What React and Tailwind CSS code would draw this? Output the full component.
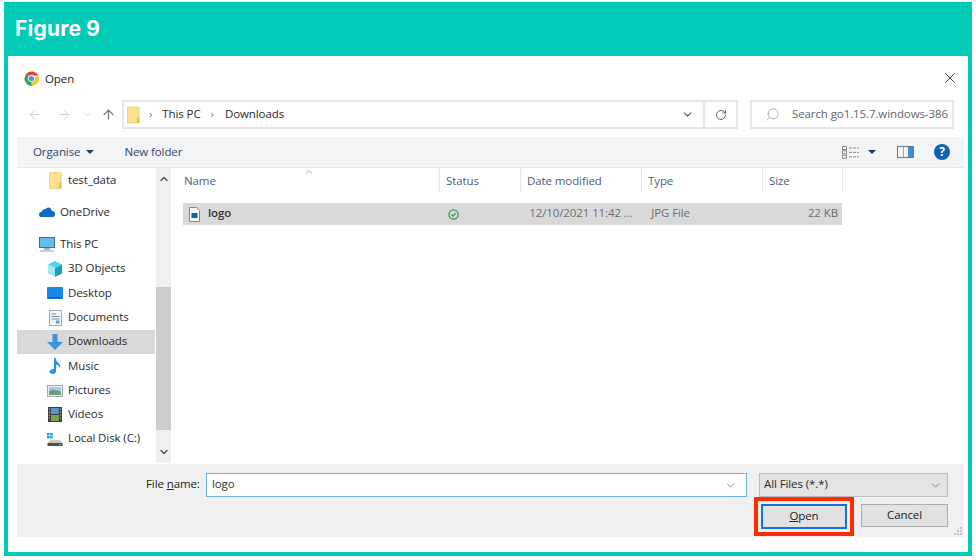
import React from 'react'
import { ArrowLeft, ArrowRight, ArrowUp, ChevronDown, ChevronUp, RotateCw, Search, X } from 'lucide-react'

const Folder = ({ className }) => (
  <svg viewBox="0 0 14 18" className={className}>
    <path d="M0.5 1 Q0.5 0.5 1 0.5 H13 V17.5 H1 Q0.5 17.5 0.5 17 Z" fill="#fbe08f" stroke="#f0d078" />
    <rect x="10.5" y="12" width="3" height="5.5" fill="#eac25e" />
  </svg>
)

const Chrome = () => (
  <svg viewBox="0 0 16 16" className="w-[15px] h-[15px]">
    <path d="M8 8 L2 3.4 A8 8 0 0 1 15.4 5 H8 Z" fill="#e0463a" />
    <path d="M8 8 L15.4 5 A8 8 0 0 1 8 16 Z" fill="#f7c531" />
    <path d="M8 8 L8 16 A8 8 0 0 1 2 3.4 Z" fill="#35a853" />
    <circle cx="8" cy="8" r="3.7" fill="#fff" />
    <circle cx="8" cy="8" r="2.8" fill="#4f8fe8" />
  </svg>
)

const Cloud = () => (
  <svg viewBox="0 0 16 10" className="w-[16px] h-[10px]">
    <path d="M3 10 Q0 10 0 7.4 Q0 5 2.6 4.8 Q3.6 1.8 6.6 2 Q8 0 10.4 0.6 Q12.6 1.4 12.6 3.8 Q16 4.2 16 7.2 Q16 10 13 10 Z" fill="#0f6cc4" />
  </svg>
)

const Monitor = () => (
  <svg viewBox="0 0 16 15" className="w-[16px] h-[15px]">
    <rect x="0.5" y="0.5" width="15" height="10" fill="#5fc0f0" stroke="#4d6a80" />
    <rect x="5" y="11" width="6" height="2" fill="#9fb4c2" />
    <rect x="1" y="13.5" width="14" height="1" fill="#8da2b0" />
  </svg>
)

const Cube = () => (
  <svg viewBox="0 0 16 16" className="w-[16px] h-[16px]">
    <path d="M8 0 L15 3.5 L8 7 L1 3.5 Z" fill="#52d3e4" />
    <path d="M1 3.5 L8 7 V16 L1 12.5 Z" fill="#a8e8ee" />
    <path d="M15 3.5 L8 7 V16 L15 12.5 Z" fill="#1a9cc0" />
  </svg>
)

const Desktop = () => (
  <svg viewBox="0 0 16 12" className="w-[16px] h-[12px]">
    <rect width="16" height="12" rx="0.5" fill="#1a88e6" />
    <rect x="1" y="10" width="14" height="1.2" fill="#0b5fa8" />
  </svg>
)

const Doc = () => (
  <svg viewBox="0 0 13 16" className="w-[13px] h-[16px]">
    <rect x="0.5" y="0.5" width="12" height="15" fill="#f4f4f4" stroke="#a9a9a9" />
    <path d="M2.5 4 H7 M2.5 6.5 H10.5 M2.5 9 H10.5" stroke="#7d8f9e" />
    <rect x="7" y="10.5" width="3.5" height="3" fill="#5ca3d6" />
  </svg>
)

const DownArrow = () => (
  <svg viewBox="0 0 16 16" className="w-[16px] h-[16px]">
    <path d="M5.5 0 H10.5 V8 H16 L8 16 L0 8 H5.5 Z" fill="#3c93e0" />
  </svg>
)

const Note = () => (
  <svg viewBox="0 0 12 16" className="w-[12px] h-[16px]">
    <path d="M5 0 H6.5 Q7 3.5 10 5.5 Q12 7.5 10.5 10 Q10.5 7.5 7 6.5 V13 Q7 16 3.5 16 Q0.5 16 0.5 13.6 Q0.5 11 5 11 Z" fill="#2396ea" />
  </svg>
)

const Picture = () => (
  <svg viewBox="0 0 16 12" className="w-[16px] h-[12px]">
    <rect x="0.5" y="0.5" width="15" height="11" fill="#e8eef0" stroke="#a8a8a8" />
    <rect x="2" y="2" width="12" height="4" fill="#a3cdea" />
    <path d="M2 6 L7 4.5 L14 6.5 V10 H2 Z" fill="#6f9a7e" />
  </svg>
)

const Film = () => (
  <svg viewBox="0 0 14 15" className="w-[14px] h-[15px]">
    <rect width="14" height="15" fill="#3f3f3f" />
    <rect x="3" y="1" width="8" height="6" fill="#5b93c4" />
    <rect x="3" y="8" width="8" height="6" fill="#7ba24e" />
    <path d="M1 2 H2 M1 5 H2 M1 8 H2 M1 11 H2 M12 2 H13 M12 5 H13 M12 8 H13 M12 11 H13" stroke="#ddd" />
  </svg>
)

const Disk = () => (
  <svg viewBox="0 0 16 13" className="w-[16px] h-[13px]">
    <rect x="0" y="0" width="2.6" height="2.4" fill="#18a0e8" />
    <rect x="3.2" y="0" width="2.6" height="2.4" fill="#18a0e8" />
    <rect x="0" y="3" width="2.6" height="2.4" fill="#18a0e8" />
    <rect x="3.2" y="3" width="2.6" height="2.4" fill="#18a0e8" />
    <path d="M3 7 H13 L15.5 10 H0.5 Z" fill="#c9c9c9" />
    <rect x="0.5" y="10" width="15" height="3" fill="#4d4d4d" />
    <rect x="12" y="11" width="2" height="1" fill="#5fd35f" />
  </svg>
)

const JpgIcon = () => (
  <svg viewBox="0 0 11 15" className="w-[11px] h-[15px]">
    <path d="M0.5 0.5 H7.5 L10.5 3.5 V14.5 H0.5 Z" fill="#fbfbfb" stroke="#7f8790" />
    <rect x="2.5" y="6" width="6" height="5" fill="#1a5fb0" />
  </svg>
)

const ViewsIcon = () => (
  <svg viewBox="0 0 17 13" className="w-[17px] h-[13px]">
    <rect x="0.5" y="0.5" width="4" height="3" fill="none" stroke="#8a8a8a" />
    <rect x="0.5" y="4.8" width="4" height="3" fill="none" stroke="#8a8a8a" />
    <rect x="0.5" y="9.2" width="4" height="3" fill="none" stroke="#8a8a8a" />
    <path d="M7 2 H17 M7 6.4 H17 M7 10.8 H17" stroke="#8a8a8a" strokeDasharray="3 1" />
  </svg>
)

const PaneIcon = () => (
  <svg viewBox="0 0 17 12" className="w-[17px] h-[12px]">
    <rect x="0.5" y="0.5" width="16" height="11" fill="#f4f4f4" stroke="#6c7a86" />
    <rect x="11" y="1" width="5" height="10" fill="#3f8fdc" />
    <rect x="6" y="1" width="1" height="10" fill="#9aa5ad" />
  </svg>
)

const Caret = () => <span className="w-0 h-0 border-x-[4px] border-x-transparent border-t-[4px] border-t-[#1f3a5f]" />

const places = [
  { label: 'test_data', icon: <Folder className="w-[13px] h-[17px]" />, pad: 'pl-[32px]', gap: 'w-[19px]', after: 'mb-[8px]' },
  { label: 'OneDrive', icon: <Cloud />, pad: 'pl-[22px]', gap: 'w-[21px]', after: 'mb-[8px]' },
  { label: 'This PC', icon: <Monitor />, pad: 'pl-[22px]', gap: 'w-[21px]', after: '' },
  { label: '3D Objects', icon: <Cube />, pad: 'pl-[30px]', gap: 'w-[21px]' },
  { label: 'Desktop', icon: <Desktop />, pad: 'pl-[30px]', gap: 'w-[21px]' },
  { label: 'Documents', icon: <Doc />, pad: 'pl-[32px]', gap: 'w-[19px]' },
  { label: 'Downloads', icon: <DownArrow />, pad: 'pl-[30px]', gap: 'w-[21px]', active: true },
  { label: 'Music', icon: <Note />, pad: 'pl-[32px]', gap: 'w-[19px]' },
  { label: 'Pictures', icon: <Picture />, pad: 'pl-[30px]', gap: 'w-[21px]' },
  { label: 'Videos', icon: <Film />, pad: 'pl-[31px]', gap: 'w-[20px]' },
  { label: 'Local Disk (C:)', icon: <Disk />, pad: 'pl-[30px]', gap: 'w-[21px]' },
]

const columns = [
  { label: 'Name', w: 'w-[267px]', pl: 'pl-[11px]' },
  { label: 'Status', w: 'w-[81px]', pl: 'pl-[6px]' },
  { label: 'Date modified', w: 'w-[121px]', pl: 'pl-[6px]' },
  { label: 'Type', w: 'w-[121px]', pl: 'pl-[6px]' },
  { label: 'Size', w: 'w-[80px]', pl: 'pl-[6px]' },
]

function App() {
  return (
    <div className="w-[976px] h-[560px] bg-white pt-[2px] pl-[4px] overflow-hidden font-['Open_Sans',sans-serif] text-[11.5px] tracking-[-0.1px] text-[#2b2b2b]">
      <div className="w-[968px] h-[554px] border-[4px] border-[#01cbb7] flex flex-col bg-white">
        <div className="h-[50px] shrink-0 bg-[#01cbb7] pl-[7px] flex items-center">
          <h1 className="font-['Inter',sans-serif] font-bold text-[21px] tracking-[0.2px] text-white -mt-[5px]">Figure 9</h1>
        </div>

        <div className="pl-[9px] pr-[4px] flex flex-col">
          {/* title bar */}
          <div className="h-[44px] pl-[7px] pr-[5px] flex items-center">
            <Chrome />
            <span className="ml-[6px] mt-[1px] text-[#222]">Open</span>
            <X size={18} strokeWidth={1.1} className="ml-auto text-[#222]" />
          </div>

          {/* address row */}
          <div className="h-[29px] flex items-center">
            <ArrowLeft size={15} strokeWidth={1.6} className="ml-[10px] text-[#d0d0d0]" />
            <ArrowRight size={15} strokeWidth={1.6} className="ml-[15px] text-[#d0d0d0]" />
            <ChevronDown size={9} strokeWidth={2} className="ml-[11px] text-[#d0d0d0]" />
            <ArrowUp size={15} strokeWidth={2} className="ml-[9px] text-[#777]" />
            <div className="ml-[6px] w-[616px] h-full border-2 border-[#e6e6e6] flex items-center">
              <Folder className="ml-[3px] w-[13px] h-[18px]" />
              <span className="ml-[9px] pb-[2px] text-[#777]">›</span>
              <span className="ml-[10px] pb-[2px]">This PC</span>
              <span className="ml-[10px] pb-[2px] text-[#777]">›</span>
              <span className="ml-[11px] pb-[2px]">Downloads</span>
              <ChevronDown size={13} strokeWidth={2} className="ml-auto mr-[9px] text-[#555]" />
              <div className="w-[33px] h-full border-l-2 border-[#e6e6e6] flex items-center justify-center">
                <RotateCw size={12} strokeWidth={2} className="text-[#666]" />
              </div>
            </div>
            <div className="ml-[12px] w-[204px] h-full border-2 border-[#e6e6e6] flex items-center text-[#666]">
              <Search size={15} strokeWidth={1.2} className="ml-[13px] -scale-x-100 text-[#9a9a9a]" />
              <span className="ml-[12px] pb-[2px] whitespace-nowrap">Search go1.15.7.windows-386</span>
            </div>
          </div>

          {/* command bar */}
          <div className="mt-[8px] h-[31px] bg-[#f3f4f6] border-b border-[#e4e6e9] flex items-center text-[#2f4566]">
            <span className="ml-[16px]">Organise</span>
            <span className="ml-[6px] flex"><Caret /></span>
            <span className="ml-[30px]">New folder</span>
            <span className="ml-auto flex items-center">
              <ViewsIcon />
              <span className="ml-[9px] flex"><Caret /></span>
              <span className="ml-[21px] flex"><PaneIcon /></span>
              <span className="ml-[20px] mr-[14px] w-[16px] h-[16px] rounded-full bg-[#0f62b8] text-white font-bold text-[12px] flex items-center justify-center">?</span>
            </span>
          </div>

          {/* body */}
          <div className="h-[295px] flex">
            <nav className="w-[138px] shrink-0">
              {places.map((p) => (
                <div key={p.label} className={`h-[24.3px] flex items-center ${p.pad} ${p.after || ''} ${p.active ? 'bg-[#d9d9d9]' : ''}`}>
                  <span className={`${p.gap} shrink-0 flex`}>{p.icon}</span>
                  <span className="pb-[2px] whitespace-nowrap">{p.label}</span>
                </div>
              ))}
            </nav>
            <div className="ml-[1px] w-[15px] shrink-0 bg-[#f0f0f0] flex flex-col items-center">
              <ChevronUp size={12} strokeWidth={3} className="mt-[5px] text-[#555]" />
              <div className="w-full h-[143px] mt-[102px] bg-[#cdcdcd]" />
              <ChevronDown size={12} strokeWidth={3} className="mt-[16px] text-[#555]" />
            </div>
            <div className="flex-1 ml-[2px] relative">
              <div className="flex h-[25px] pl-0">
                {columns.map((c) => (
                  <div key={c.label} className={`${c.w} ${c.pl} border-r border-[#e5e5e5] flex items-center text-[#4c607a]`}>{c.label}</div>
                ))}
              </div>
              <ChevronUp size={12} strokeWidth={1.2} className="absolute left-[130px] -top-[2px] text-[#777]" />
              <div className="mt-[10px] ml-[10px] w-[659px] h-[22px] bg-[#d9d9d9] flex items-center text-[#6d6d6d]">
                <span className="ml-[6px] flex"><JpgIcon /></span>
                <span className="ml-[8px] pb-[2px] font-semibold text-[#333]">logo</span>
                <svg viewBox="0 0 12 12" className="ml-[217px] w-[11px] h-[11px]">
                  <circle cx="6" cy="6" r="5" fill="none" stroke="#2e9e4f" strokeWidth="1.4" />
                  <path d="M3.6 6 L5.4 7.8 L8.5 4.4" fill="none" stroke="#2e9e4f" strokeWidth="1.3" />
                </svg>
                <span className="ml-[70px] pb-[2px] w-[122px] whitespace-nowrap">12/10/2021 11:42 ...</span>
                <span className="pb-[2px]">JPG File</span>
                <span className="ml-auto mr-[4px] pb-[2px]">22 KB</span>
              </div>
            </div>
          </div>

          {/* footer */}
          <div className="relative mt-[1px] h-[73px] bg-[#f0f0f0] pt-[9px] flex flex-col">
            <div className="h-[24px] flex items-center">
              <span className="ml-[129px] pb-[2px] w-[60px] text-[#222] whitespace-nowrap">File <u>n</u>ame:</span>
              <div className="w-[541px] h-full bg-white border border-[#6fb0e8] flex items-center pl-[5px] pr-[9px]">
                <span className="pb-[2px] text-[#333]">logo</span>
                <ChevronDown size={13} strokeWidth={1.4} className="ml-auto text-[#777]" />
              </div>
              <div className="ml-[12px] w-[189px] h-full bg-[#e3e3e3] border border-[#bdbdbd] flex items-center pl-[4px] pr-[5px]">
                <span className="pb-[2px]">All Files (*.*)</span>
                <ChevronDown size={13} strokeWidth={1.4} className="ml-auto text-[#666]" />
              </div>
            </div>
            <div className="flex ml-[737px]">
              <div className="w-[100px] h-[39px] border-[4px] border-[#fa2c00] p-[3px]">
                <button className="w-full h-full pb-[2px] bg-[#e1e1e1] border-2 border-[#0d78d4] text-[#222]"><u>O</u>pen</button>
              </div>
              <button className="ml-[7px] mt-[7px] w-[87px] h-[23px] pb-[2px] bg-[#e1e1e1] border border-[#adadad] text-[#222]">Cancel</button>
            </div>
            <svg viewBox="0 0 8 8" className="absolute right-[2px] bottom-[2px] w-[8px] h-[8px]">
              <path d="M6 0h2v2H6z M3 3h2v2H3z M6 3h2v2H6z M0 6h2v2H0z M3 6h2v2H3z M6 6h2v2H6z" fill="#c4c4c4" />
            </svg>
          </div>
        </div>
      </div>
    </div>
  )
}

export default App
